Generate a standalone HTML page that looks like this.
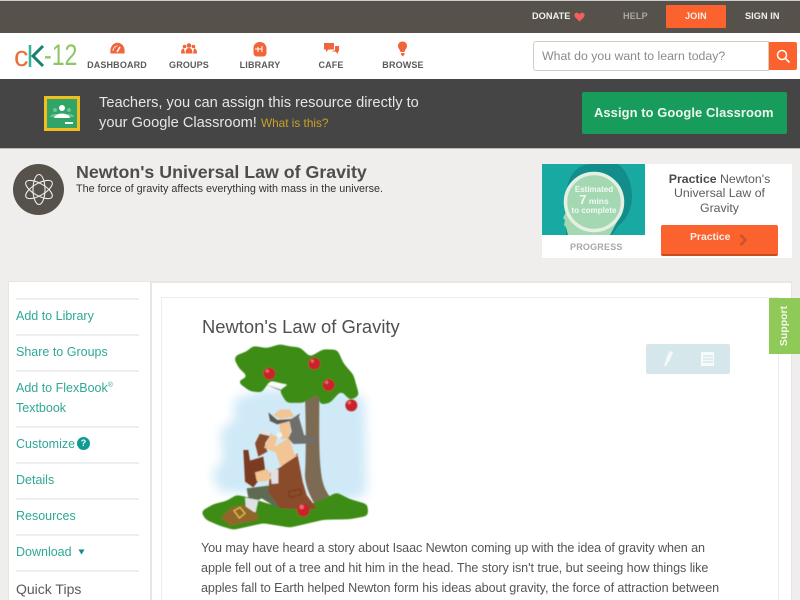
<!DOCTYPE html>
<html><head><meta charset="utf-8"><style>
html,body{margin:0;padding:0;width:800px;height:600px;overflow:hidden;background:#efeeec;font-family:"Liberation Sans",sans-serif}
.a{position:absolute;white-space:nowrap}
.box{position:absolute}
.nv{position:absolute;top:60px;font-size:9px;font-weight:bold;color:#5a5a58;text-align:center;width:80px;letter-spacing:.15px}
.tp{position:absolute;top:11px;font-size:9.2px;font-weight:bold;color:#f2f1ee;letter-spacing:.05px}
.sl{position:absolute;left:16px;width:123px;height:2px;background:#eeeeec}
.si{position:absolute;left:16px;font-size:12.5px;color:#2fa896;white-space:nowrap}
.p{position:absolute;left:201px;font-size:12.6px;color:#555;white-space:nowrap}
</style></head><body>
<div class="box" style="left:0;top:0;width:800px;height:1px;background:#ccc"></div>
<div class="box" style="left:0;top:1px;width:800px;height:32px;background:#56524b"></div>
<div class="tp" style="left:532px">DONATE</div>
<svg class="box" style="left:574px;top:12px" width="11" height="10" viewBox="0 0 11 10"><path d="M5.500 9.500L1 5C-.5 3 1 .5 3 .8c1.200 0 2 .8 2.500 1.700C6 1.600 6.800.8 8 .8c2-.3 3.500 2.200 2 4.200z" fill="#f2605c"/></svg>
<div class="tp" style="left:623px;color:#a9a69f">HELP</div>
<div class="box" style="left:666px;top:5px;width:60px;height:23px;background:#fb622d;border-radius:1px"></div>
<div class="tp" style="left:685px">JOIN</div>
<div class="tp" style="left:745px">SIGN IN</div>

<div class="box" style="left:0;top:33px;width:800px;height:46px;background:#fff"></div>
<div class="a" style="left:14px;top:39px;font-size:29px;color:#ee6e3c;line-height:36px;letter-spacing:-1px">c</div>
<svg class="box" style="left:28px;top:44px" width="18" height="24" viewBox="0 0 18 24"><path d="M2 1v22" stroke="#2fb59a" stroke-width="2.500" fill="none"/><path d="M15 2L5 12l10 10" stroke="#16826f" stroke-width="3" fill="none"/></svg>
<div class="a" style="left:44px;top:38px;font-size:30px;color:#8cc663;line-height:36px;transform:scaleX(.77);transform-origin:0 0">-12</div>

<svg class="box" style="left:110px;top:42px" width="15" height="12" viewBox="0 0 15 12"><path d="M.5 11.500C-.5 5 3 .7 7.500.7S15.500 5 14.500 11.500z" fill="#f0653a"/><path d="M7 10l3-5" stroke="#fff" stroke-width="1.500"/><path d="M3 9c0-3 2-5 4.500-5" stroke="#fff" stroke-width=".8" fill="none"/></svg>
<div class="nv" style="left:77px">DASHBOARD</div>
<svg class="box" style="left:181px;top:43px" width="16" height="11" viewBox="0 0 16 11"><g fill="#f0653a"><circle cx="8" cy="2.500" r="2.300"/><circle cx="3.500" cy="3.500" r="1.800"/><circle cx="12.500" cy="3.500" r="1.800"/><path d="M4.500 10.500c0-4 1.500-5.500 3.500-5.500s3.500 1.500 3.500 5.500zM0 10.500c0-3.500 1-5 3-5l1 5zM16 10.500c0-3.500-1-5-3-5l-1 5z"/></g></svg>
<div class="nv" style="left:149px">GROUPS</div>
<svg class="box" style="left:253px;top:41px" width="14" height="16" viewBox="0 0 14 16"><path d="M7 1c4 0 6.500 3 6.500 7v4c0 2-1.500 3.500-3.500 3.500H4C2 15.500.5 14 .5 12V7C.5 3.500 3 1 7 1z" fill="#f0653a"/><path d="M2 8h7M5 6v5M9 5v6" stroke="#fff" stroke-width="1" fill="none"/></svg>
<div class="nv" style="left:220px">LIBRARY</div>
<svg class="box" style="left:324px;top:43px" width="15" height="13" viewBox="0 0 15 13"><path d="M0 0h10v6.500H4.500L2 9V6.500H0z" fill="#f0653a"/><path d="M11 3h4v5.500h-1V11L11.500 8.500H7.500L11 7z" fill="#f0653a"/></svg>
<div class="nv" style="left:291px">CAFE</div>
<svg class="box" style="left:397px;top:41px" width="11" height="16" viewBox="0 0 11 16"><path d="M5.500.5C8.500.5 10 2.500 10 5c0 2.500-2 3.500-2.500 6h-4C3 8.500 1 7.500 1 5 1 2.500 2.500.5 5.500.5z" fill="#f0653a"/><path d="M4 12h3.500v1.500L5.800 15.500 4 13.500z" fill="#f0653a"/></svg>
<div class="nv" style="left:363px">BROWSE</div>

<div class="box" style="left:533px;top:41px;width:236px;height:30px;background:#fff;border:1px solid #cfcdc4;border-radius:3px 0 0 3px;box-sizing:border-box"></div>
<div class="a" style="left:542px;top:49px;font-size:12.300px;color:#8b8b8b">What do you want to learn today?</div>
<div class="box" style="left:769px;top:42px;width:28px;height:28px;background:#fb622d;border-radius:0 2px 2px 0"></div>
<svg class="box" style="left:776px;top:49px" width="15" height="15" viewBox="0 0 15 15"><circle cx="6" cy="6" r="4.500" stroke="#fff" stroke-width="1.500" fill="none"/><path d="M9.500 9.500l4 4" stroke="#fff" stroke-width="1.800"/></svg>

<div class="box" style="left:0;top:79px;width:800px;height:69px;background:#454545"></div>
<div class="box" style="left:0;top:148px;width:800px;height:1px;background:#bbb"></div>
<div class="box" style="left:44px;top:96px;width:36px;height:35px;background:#2fa567;border:3px solid #f2bd1e;box-sizing:border-box"></div>
<svg class="box" style="left:47px;top:99px" width="30" height="29" viewBox="0 0 30 29"><g fill="#6fc294"><circle cx="8" cy="11" r="2"/><circle cx="22" cy="11" r="2"/><path d="M3 18c1-4 9-4 10 0zM17 18c1-4 9-4 10 0z"/></g><circle cx="15" cy="9" r="3" fill="#fff"/><path d="M7 19c1-6 15-6 16 0z" fill="#fff"/><rect x="18" y="23" width="8" height="2" fill="#fff"/></svg>
<div class="a" style="left:99px;top:95px;font-size:14.650px;color:#e6e6e6">Teachers, you can assign this resource directly to</div>
<div class="a" style="left:99px;top:115px;font-size:14.650px;color:#e6e6e6">your Google Classroom! <span style="font-size:11.800px;color:#c9a227">What is this?</span></div>
<div class="box" style="left:582px;top:92px;width:205px;height:42px;background:#189c5c;border-radius:2px"></div>
<div class="a" style="left:594px;top:105px;font-size:12.900px;font-weight:bold;color:#eef5ee;letter-spacing:.1px">Assign to Google Classroom</div>

<div class="box" style="left:13px;top:164px;width:51px;height:51px;border-radius:50%;background:#56524b"></div>
<svg class="box" style="left:23px;top:173px" width="32" height="33" viewBox="0 0 32 33" fill="none" stroke="#eee" stroke-width="1.100"><ellipse cx="16" cy="16.500" rx="6" ry="15"/><ellipse cx="16" cy="16.500" rx="6" ry="15" transform="rotate(60 16 16.500)"/><ellipse cx="16" cy="16.500" rx="6" ry="15" transform="rotate(-60 16 16.500)"/></svg>
<div class="a" style="left:76px;top:162px;font-size:17.800px;font-weight:bold;color:#4d4d49">Newton's Universal Law of Gravity</div>
<div class="a" style="left:76px;top:183px;font-size:10.800px;color:#333">The force of gravity affects everything with mass in the universe.</div>

<div class="box" style="left:542px;top:164px;width:250px;height:94px;background:#fff"></div>
<svg class="box" style="left:542px;top:164px" width="103" height="71" viewBox="0 0 103 71"><rect width="103" height="71" fill="#17a9a2"/><path d="M24 30C26 10 36 0 50 0h26c8 6 14 18 14 32 0 14-6 24-14 30l-6 9H24z" fill="#128d8c"/><path d="M26 71l-2-8-2-2 1-5-2-2 3-6 2-12 30 10 20 10-8 15z" fill="#a3d8b3"/><circle cx="52" cy="38" r="28.500" fill="#a3d8b3" stroke="#e4f1e2" stroke-width="3.500"/><g fill="#f2faf2" font-family="Liberation Sans" font-weight="bold" text-anchor="middle"><text x="52" y="28" font-size="8">Estimated</text><text x="52" y="40"><tspan font-size="13">7</tspan><tspan font-size="8.500"> mins</tspan></text><text x="52" y="49" font-size="8">to complete</text></g></svg>
<div class="a" style="left:570px;top:242px;font-size:9px;font-weight:bold;color:#a8a8a6;letter-spacing:.2px">PROGRESS</div>
<div class="a" style="left:650px;top:172px;width:139px;text-align:center;font-size:12.300px;line-height:14.300px;color:#5c5c5c;white-space:normal"><b style="color:#4b4b49">Practice</b> Newton's<br>Universal Law of<br>Gravity</div>
<div class="box" style="left:661px;top:225px;width:117px;height:29px;background:#fb622d;border-bottom:2px solid #c94c1f;border-radius:2px"></div>
<div class="a" style="left:690px;top:232px;font-size:10.400px;font-weight:bold;color:#fbeee6">Practice</div>
<svg class="box" style="left:739px;top:234px" width="9" height="12" viewBox="0 0 9 12"><path d="M1.500 1l5 5-5 5" stroke="#c9532a" stroke-width="2.600" fill="none"/></svg>

<div class="box" style="left:8px;top:281px;width:784px;height:319px;background:#e7e6e4"></div>
<div class="box" style="left:9px;top:282px;width:141px;height:318px;background:#fff"></div>
<div class="box" style="left:152px;top:283px;width:639px;height:317px;background:#fff"></div>
<div class="box" style="left:161px;top:297px;width:618px;height:303px;border:1px solid #ededeb;border-bottom:0;box-sizing:border-box;background:#fff"></div>

<div class="sl" style="top:298px"></div><div class="si" style="top:309px">Add to Library</div>
<div class="sl" style="top:334px"></div><div class="si" style="top:345px">Share to Groups</div>
<div class="sl" style="top:370px"></div><div class="si" style="top:381px">Add to FlexBook<sup style="font-size:7px;line-height:0;vertical-align:5px">®</sup></div>
<div class="si" style="top:401px">Textbook</div>
<div class="sl" style="top:426px"></div><div class="si" style="top:437px">Customize</div>
<div class="box" style="left:77px;top:437px;width:13px;height:13px;border-radius:50%;background:#0f9b91;color:#fff;font-size:9px;font-weight:bold;text-align:center;line-height:13px">?</div>
<div class="sl" style="top:462px"></div><div class="si" style="top:473px">Details</div>
<div class="sl" style="top:498px"></div><div class="si" style="top:509px">Resources</div>
<div class="sl" style="top:534px"></div><div class="si" style="top:545px">Download</div>
<svg class="box" style="left:78px;top:549px" width="7" height="6" viewBox="0 0 7 6"><path d="M.5.500h6L3.500 5.500z" fill="#128a85"/></svg>
<div class="sl" style="top:570px"></div><div class="si" style="top:581px;font-size:14px;color:#5a5a5a">Quick Tips</div>

<div class="a" style="left:202px;top:316px;font-size:18.400px;color:#505050">Newton's Law of Gravity</div>

<svg class="box" style="left:190px;top:335px" width="200" height="205" viewBox="0 0 600 615">
<defs>
<filter id="b" x="-15%" y="-15%" width="130%" height="130%"><feGaussianBlur stdDeviation="16"/></filter>
<filter id="g" x="-10%" y="-10%" width="120%" height="120%"><feGaussianBlur stdDeviation="7"/><feColorMatrix type="matrix" values="1 0 0 0 0 0 1 0 0 0 0 0 1 0 0 0 0 0 14 -6"/></filter>
<filter id="s" x="-5%" y="-5%" width="110%" height="110%"><feGaussianBlur stdDeviation="1.500"/></filter>
</defs>
<path d="M130 195L210 165 470 160 525 195 530 475 470 500 90 470 65 420 100 370 90 290 135 250z" fill="#cfe9f7" filter="url(#b)"/>
<g filter="url(#s)">
<path d="M345 170C346 230 350 330 345 420 345 450 365 500 385 522L445 515C425 495 405 470 398 440 385 380 388 290 388 175z" fill="#7d6a52"/>
<path d="M225 148L290 170 345 165 350 140 372 128 375 150 360 172 345 185 285 172z" fill="#7d6a52"/>
<g filter="url(#g)">
<path d="M138 62L170 50 190 33 230 40 270 28 300 35 330 38 360 66 400 43 442 45 460 85 490 120 507 182 480 195 455 168 445 175 420 203 390 209 385 175 340 203 290 203 268 165 300 150 340 132 300 142 280 146 240 136 215 172 180 168 142 140 175 125 148 100 133 72z" fill="#3e8c13"/>
</g>
<g filter="url(#g)">
<path d="M33 530L70 508 110 498 140 480 175 488 240 508 320 523 400 493 440 473 480 493 532 508 534 542 480 552 400 554 300 577 220 564 130 584 90 572 48 554z" fill="#3e8c13"/>
</g>
<path d="M175 488L170 460 235 452 295 518 255 515 215 490 195 500z" fill="#5f6a52"/>
<path d="M165 488L205 495 197 532 168 525z" fill="#dfe1e3"/>
<path d="M93 547L125 516 160 510 205 540 203 555 120 572z" fill="#92652b"/>
<path d="M132 527L150 517 165 535 148 549z" fill="none" stroke="#d8c04c" stroke-width="4"/>
<path d="M270 398L322 355 338 440 350 480 382 522 320 522 270 520 235 470 240 412z" fill="#8a4b2a"/>
<path d="M295 470L330 462 335 478 300 488z" fill="none" stroke="#5d2f18" stroke-width="2"/>
<path d="M245 340L298 308 312 355 322 362 272 395 258 355z" fill="#f3c494"/>
<path d="M195 325L215 285 245 295 225 325 232 350 205 365z" fill="#8a4b2a"/>
<path d="M215 285L245 292 240 303 208 296z" fill="#dfe6e6"/>
<path d="M222 338L243 298 262 305 250 350z" fill="#f3c494"/>
<path d="M160 345L175 345 180 377 220 365 226 410 190 457 165 440z" fill="#7a3a22"/>
<path d="M195 412L232 402 245 430 225 440 200 438z" fill="#f3c494"/>
<path d="M240 405L265 403 265 445 245 447z" fill="#dfe1e3"/>
<path d="M250 240L270 224 300 224 312 245 270 252z" fill="#f3c494"/>
<path d="M268 262L300 260 302 310 272 312z" fill="#f3c494"/>
<path d="M235 232L262 255 305 252 330 235 322 258 300 258 262 268 240 258z" fill="#5e5a52"/>
<path d="M298 255L325 240 342 300 378 308 372 325 310 327 295 310 305 290z" fill="#6e6e6a"/>
<circle cx="268" cy="300" r="9" fill="#eef3f5"/>
<g fill="#c8202a"><circle cx="238" cy="116" r="18"/><circle cx="373" cy="86" r="18"/><circle cx="416" cy="150" r="18"/><circle cx="484" cy="211" r="18"/><circle cx="340" cy="526" r="19"/></g>
<g fill="#e86a6a"><circle cx="232" cy="108" r="5"/><circle cx="367" cy="78" r="5"/><circle cx="410" cy="142" r="5"/><circle cx="478" cy="203" r="5"/><circle cx="335" cy="516" r="7"/></g>
</g>
</svg>

<div class="box" style="left:646px;top:344px;width:84px;height:30px;background:#d6e7eb;border-radius:2px"></div>
<svg class="box" style="left:660px;top:350px" width="54" height="18" viewBox="0 0 54 18"><path d="M4 16L7 6l3-5 3 1-2 6-5 8z" fill="#f4f8f8"/><rect x="41" y="2" width="14" height="14" fill="#f6fafa"/><path d="M43 6h10M43 9h10M43 12h10" stroke="#c8dde2" stroke-width="1"/></svg>

<div class="box" style="left:769px;top:298px;width:31px;height:56px;background:#8fc957"></div>
<div class="a" style="left:755px;top:320px;width:58px;text-align:center;font-size:10.500px;font-weight:bold;color:#f3f8ec;transform:rotate(-90deg)">Support</div>

<div class="p" style="top:541px;letter-spacing:-.1px">You may have heard a story about Isaac Newton coming up with the idea of gravity when an</div>
<div class="p" style="top:561px;letter-spacing:-.06px">apple fell out of a tree and hit him in the head. The story isn't true, but seeing how things like</div>
<div class="p" style="top:581px;letter-spacing:-.07px">apples fall to Earth helped Newton form his ideas about gravity, the force of attraction between</div>
</body></html>
